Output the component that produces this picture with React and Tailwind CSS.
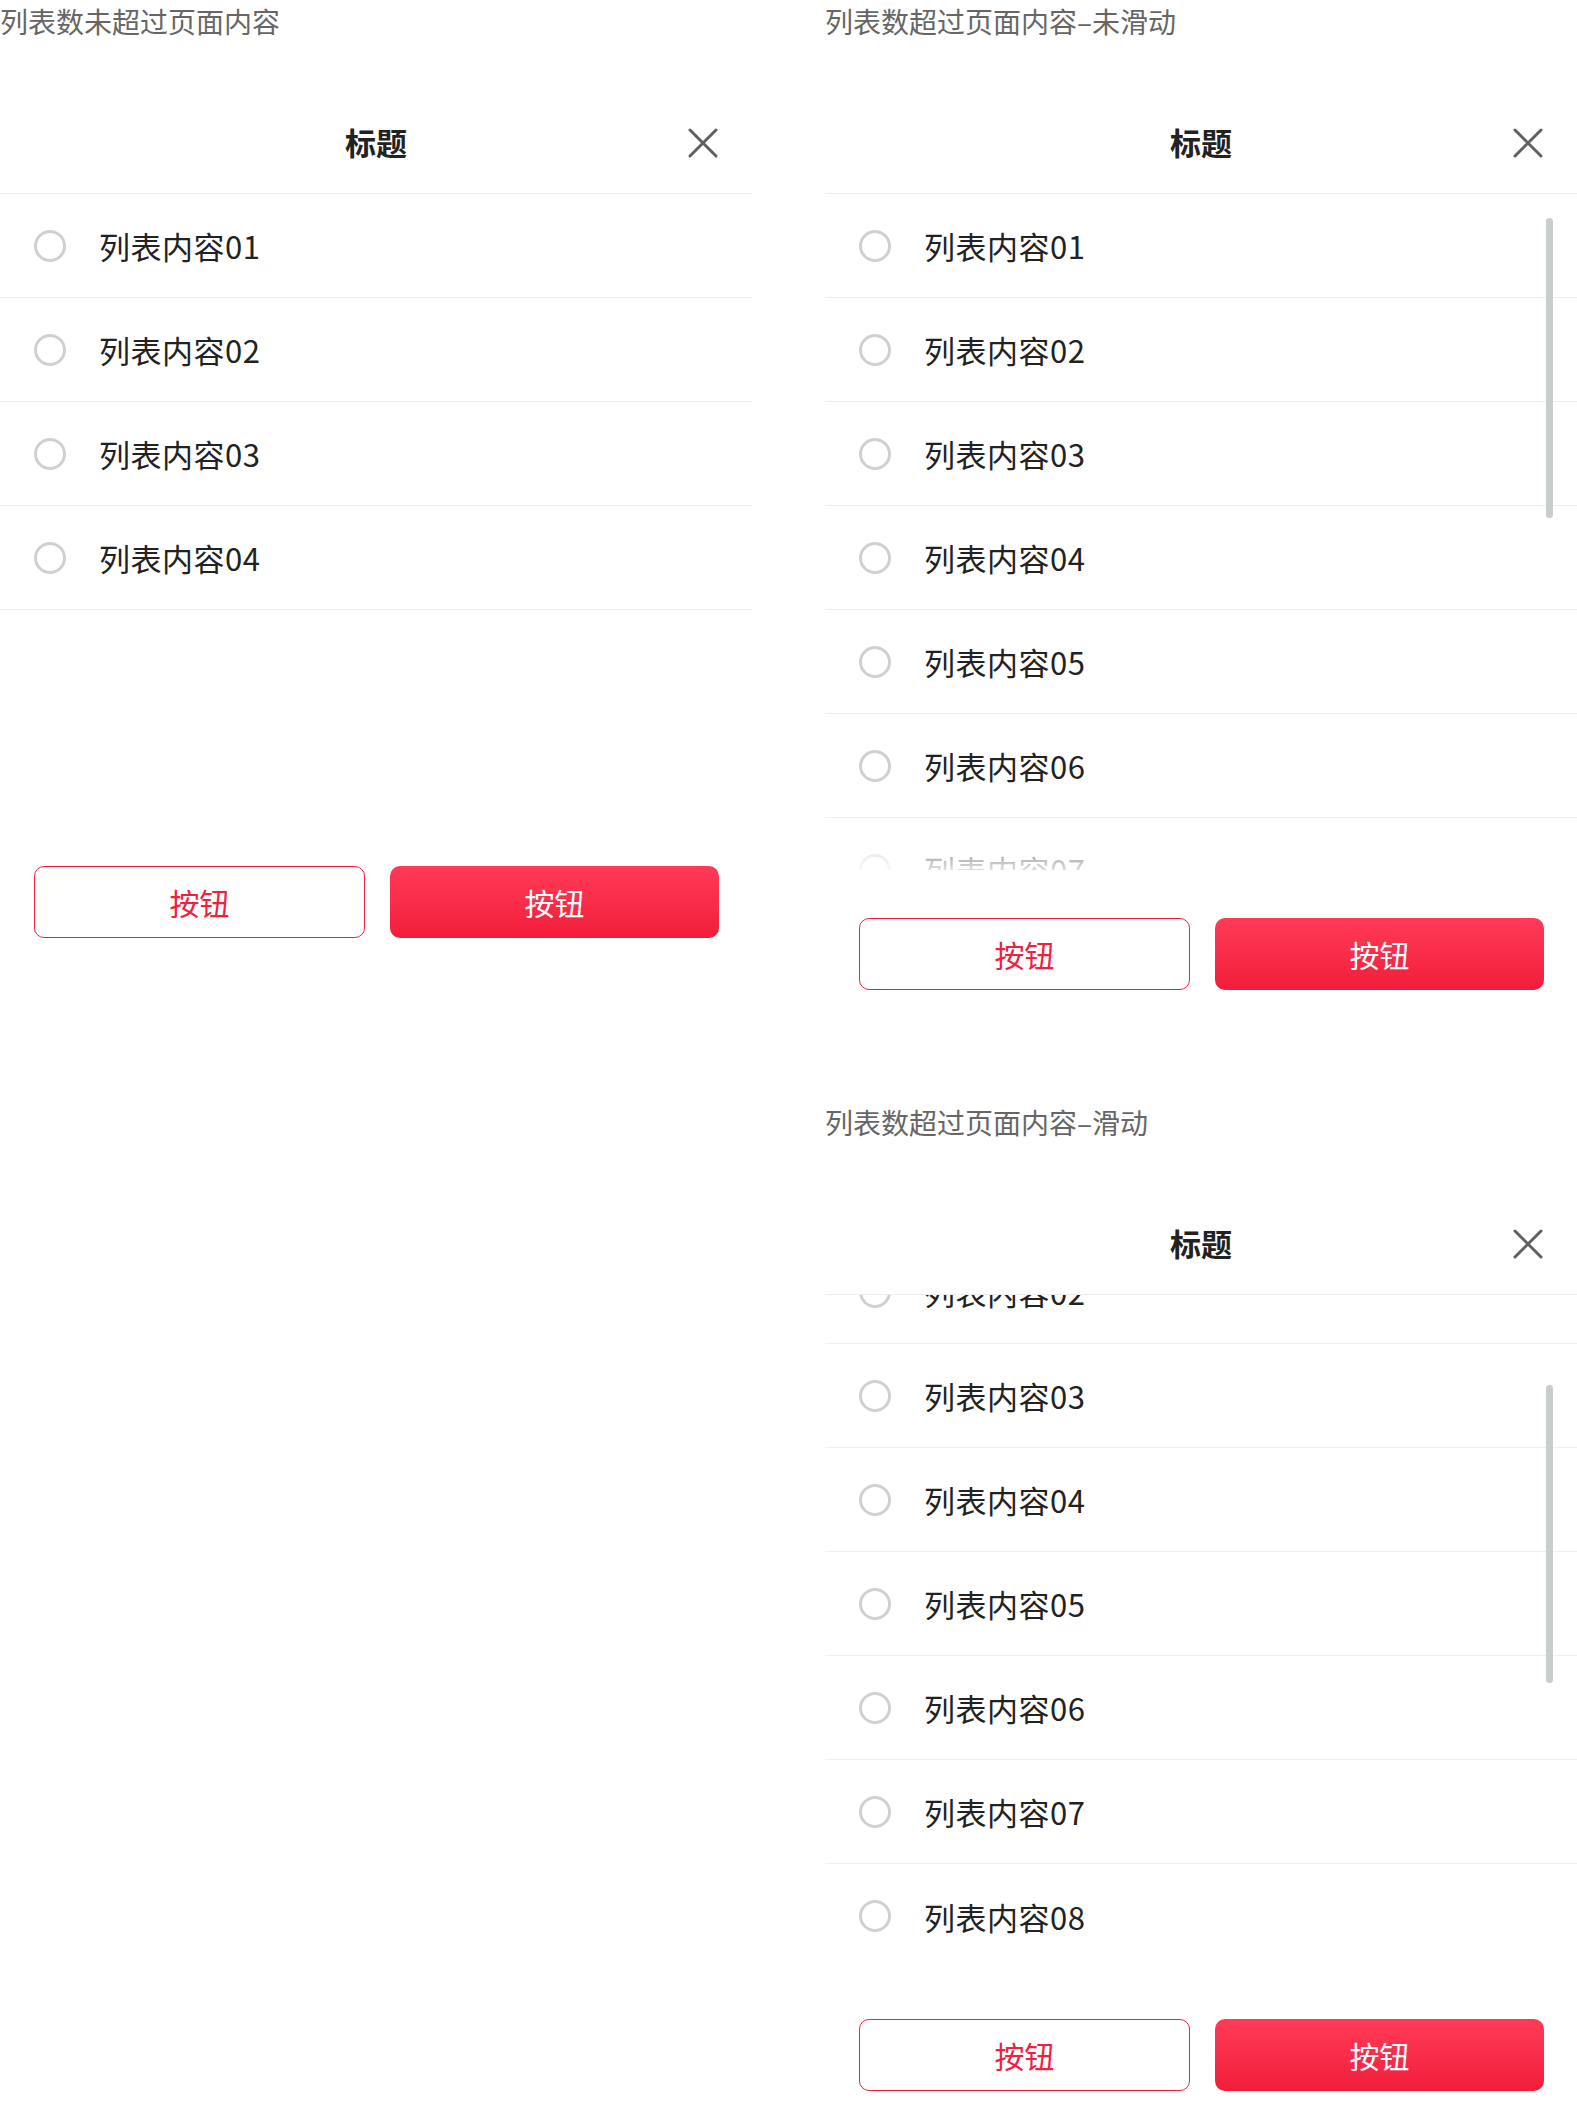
import React from "react";

const FONT = { fontFamily: '"Noto Sans CJK SC", "Noto Sans", sans-serif' };

function CloseIcon() {
  return (
    <svg width="30" height="30" viewBox="0 0 30 30" fill="none">
      <path d="M2 2 L28 28 M28 2 L2 28" stroke="#606060" strokeWidth="3" strokeLinecap="round" />
    </svg>
  );
}

function Row({ label, last }) {
  return (
    <div
      className={
        "flex h-[104px] items-center gap-[33px] pl-[34px] " +
        (last ? "" : "border-b border-[#eeeeee]")
      }
    >
      <div className="h-[32px] w-[32px] shrink-0 rounded-full border-[3px] border-[#cdd1d1]" />
      <span className="text-[31px] leading-none tracking-[0.5px] text-[#222222]">{label}</span>
    </div>
  );
}

function Header() {
  return (
    <div className="grid h-[102px] grid-cols-[1fr_auto_1fr] items-center border-b border-[#eeeeee]">
      <div />
      <div className="-mt-[3px] text-[31px] font-semibold leading-none text-[#222222]">标题</div>
      <div className="flex justify-end pr-[34px]">
        <CloseIcon />
      </div>
    </div>
  );
}

function Footer() {
  return (
    <div className="flex gap-[25px] pl-[34px] pr-[33px] pt-[48px]">
      <button className="flex h-[72px] flex-1 items-center justify-center rounded-[10px] border border-[#f1203e] bg-white text-[30px] text-[#f1203e]">
        按钮
      </button>
      <button className="flex h-[72px] flex-1 items-center justify-center rounded-[10px] bg-linear-to-b from-[#ff3a57] to-[#f21c3a] text-[30px] text-white">
        按钮
      </button>
    </div>
  );
}

function Caption({ children }) {
  return (
    <div className="h-[92px] text-[28px] leading-[42px] text-[#666666]">{children}</div>
  );
}

const labels = (n) =>
  Array.from({ length: n }, (_, i) => "列表内容" + String(i + 1).padStart(2, "0"));

export default function App() {
  return (
    <div className="min-h-[2108px] w-[1577px] bg-white" style={FONT}>
      <div className="flex gap-[73px]">
        {/* Left column */}
        <div className="w-[752px]">
          <Caption>列表数未超过页面内容</Caption>
          <Header />
          <div className="h-[624px]">
            {labels(4).map((l) => (
              <Row key={l} label={l} />
            ))}
          </div>
          <Footer />
        </div>

        {/* Right column */}
        <div className="w-[752px]">
          <Caption>列表数超过页面内容–未滑动</Caption>
          <Header />
          <div className="relative h-[676px] overflow-hidden">
            <div>
              {labels(8).map((l, i) => (
                <Row key={l} label={l} last={i === 7} />
              ))}
            </div>
            <div className="absolute bottom-0 left-0 right-0 h-[56px] bg-linear-to-b from-white/0 to-white/85" />
            <div className="absolute right-[24px] top-[24px] h-[300px] w-[7px] rounded-full bg-[#c9cdcd]" />
          </div>
          <Footer />

          <div className="mt-[111px]">
            <Caption>列表数超过页面内容–滑动</Caption>
            <Header />
            <div className="relative h-[676px] overflow-hidden">
              <div className="-mt-[159px]">
                {labels(8).map((l, i) => (
                  <Row key={l} label={l} last={i === 7} />
                ))}
              </div>
              <div className="absolute right-[24px] top-[90px] h-[298px] w-[7px] rounded-full bg-[#c9cdcd]" />
            </div>
            <Footer />
          </div>
        </div>
      </div>
    </div>
  );
}
